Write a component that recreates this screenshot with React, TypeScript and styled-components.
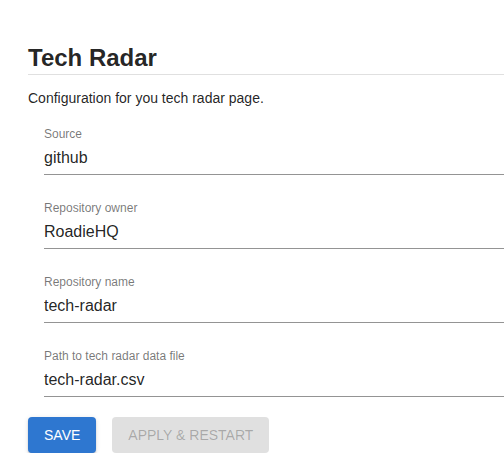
import React from "react";
import styled, { createGlobalStyle } from "styled-components";

const GlobalStyle = createGlobalStyle`
  html, body {
    margin: 0;
    padding: 0;
    background: #ffffff;
    overflow: hidden;
  }
  body {
    font-family: "Liberation Sans", Arial, Helvetica, sans-serif;
    color: rgba(0, 0, 0, 0.87);
  }
`;

const Page = styled.div`
  width: 600px;
  padding: 44px 0 0 28px;
  box-sizing: border-box;
`;

const Title = styled.h2`
  margin: 0;
  padding-bottom: 2px;
  font-size: 24px;
  line-height: 28px;
  font-weight: 700;
  color: rgba(0, 0, 0, 0.87);
  border-bottom: 1px solid #e0e0e0;
`;

const Description = styled.p`
  margin: 13px 0 0;
  font-size: 14px;
  line-height: 20px;
  color: rgba(0, 0, 0, 0.87);
`;

const Fields = styled.div`
  display: flex;
  flex-direction: column;
  gap: 26px;
  margin: 19px 0 0 16px;
`;

const Field = styled.label`
  display: flex;
  flex-direction: column;
`;

const Label = styled.span`
  font-size: 12px;
  line-height: 14px;
  color: rgba(0, 0, 0, 0.54);
  height: 16px;
`;

const Input = styled.input`
  font-family: inherit;
  font-size: 16px;
  line-height: 19px;
  height: 19px;
  padding: 5px 0 7px;
  margin: 0;
  border: 0;
  border-bottom: 1px solid rgba(0, 0, 0, 0.42);
  outline: none;
  background: transparent;
  color: rgba(0, 0, 0, 0.87);
`;

const Actions = styled.div`
  display: flex;
  gap: 16px;
  margin-top: 20px;
`;

const Button = styled.button<{ $primary?: boolean }>`
  font-family: inherit;
  font-size: 14px;
  font-weight: 400;
  text-transform: uppercase;
  height: 36px;
  padding: 0 16px;
  border: 0;
  border-radius: 4px;
  cursor: pointer;
  background: ${(p) => (p.$primary ? "#2e77d0" : "#e0e0e0")};
  color: ${(p) => (p.$primary ? "#ffffff" : "rgba(0, 0, 0, 0.26)")};
  box-shadow: ${(p) =>
    p.$primary
      ? "0px 3px 1px -2px rgba(0,0,0,0.2), 0px 2px 2px 0px rgba(0,0,0,0.14), 0px 1px 5px 0px rgba(0,0,0,0.12)"
      : "none"};
`;

const fields = [
  { label: "Source", value: "github" },
  { label: "Repository owner", value: "RoadieHQ" },
  { label: "Repository name", value: "tech-radar" },
  { label: "Path to tech radar data file", value: "tech-radar.csv" },
];

export default function App() {
  return (
    <>
      <GlobalStyle />
      <Page>
        <Title>Tech Radar</Title>
        <Description>Configuration for you tech radar page.</Description>
        <Fields>
          {fields.map((f) => (
            <Field key={f.label}>
              <Label>{f.label}</Label>
              <Input defaultValue={f.value} />
            </Field>
          ))}
        </Fields>
        <Actions>
          <Button $primary>Save</Button>
          <Button disabled>Apply &amp; Restart</Button>
        </Actions>
      </Page>
    </>
  );
}
